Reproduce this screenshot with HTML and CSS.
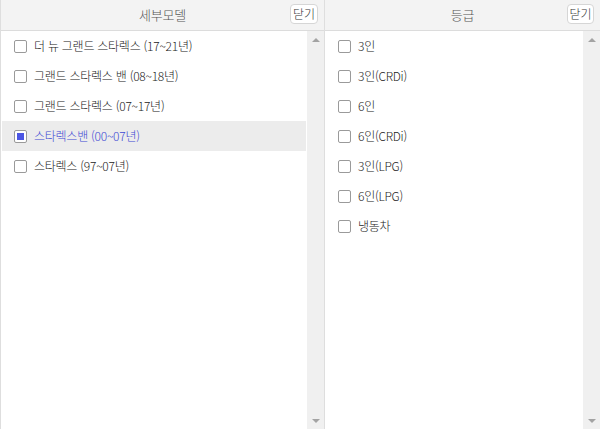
FILE: index.html
```html
<!DOCTYPE html>
<html lang="ko">
<head>
<meta charset="utf-8">
<link rel="stylesheet" href="styles.css">
</head>
<body>
<div class="wrap">
  <section class="panel panel-left">
    <header class="head">
      <span class="title">세부모델</span>
      <button class="close">닫기</button>
    </header>
    <div class="body">
      <ul class="list">
        <li class="row"><span class="cb"></span><span class="label">더 뉴 그랜드 스타렉스 (17~21년)</span></li>
        <li class="row"><span class="cb"></span><span class="label">그랜드 스타렉스 밴 (08~18년)</span></li>
        <li class="row"><span class="cb"></span><span class="label">그랜드 스타렉스 (07~17년)</span></li>
        <li class="row selected"><span class="cb checked"></span><span class="label">스타렉스밴 (00~07년)</span></li>
        <li class="row"><span class="cb"></span><span class="label">스타렉스 (97~07년)</span></li>
      </ul>
      <div class="scroll">
        <span class="arrow up"></span>
        <span class="arrow down"></span>
      </div>
    </div>
  </section>
  <section class="panel panel-right">
    <header class="head">
      <span class="title">등급</span>
      <button class="close">닫기</button>
    </header>
    <div class="body">
      <ul class="list">
        <li class="row"><span class="cb"></span><span class="label">3인</span></li>
        <li class="row"><span class="cb"></span><span class="label">3인(CRDi)</span></li>
        <li class="row"><span class="cb"></span><span class="label">6인</span></li>
        <li class="row"><span class="cb"></span><span class="label">6인(CRDi)</span></li>
        <li class="row"><span class="cb"></span><span class="label">3인(LPG)</span></li>
        <li class="row"><span class="cb"></span><span class="label">6인(LPG)</span></li>
        <li class="row"><span class="cb"></span><span class="label">냉동차</span></li>
      </ul>
      <div class="scroll">
        <span class="arrow up"></span>
        <span class="arrow down"></span>
      </div>
    </div>
  </section>
</div>
</body>
</html>
```

FILE: styles.css
```css
* { box-sizing: border-box; }
html, body { margin: 0; padding: 0; background: #fff; }
body {
  font-family: "Noto Sans CJK KR", "Noto Sans", sans-serif;
  font-size: 12px;
  font-weight: 300;
  color: #222;
}
.wrap {
  display: flex;
  width: 600px;
  height: 429px;
}
.panel {
  display: flex;
  flex-direction: column;
  border-left: 1px solid #dedede;
  height: 429px;
}
.panel-left { width: 324px; }
.panel-right { width: 276px; }
.head {
  position: relative;
  height: 31px;
  background: #f3f3f3;
  border-bottom: 1px solid #dcdcdc;
  display: flex;
  align-items: center;
  justify-content: center;
}
.title {
  font-size: 13px;
  color: #555;
  letter-spacing: -0.2px;
  margin-top: -2px;
}
.close {
  position: absolute;
  right: 6px;
  top: 4px;
  height: 20px;
  width: 28px;
  padding: 0;
  border: 1px solid #d6d6d6;
  border-radius: 4px;
  background: #fff;
  font-family: inherit;
  font-weight: 300;
  font-size: 12px;
  color: #333;
  line-height: 16px;
}
.panel-right .close { width: 27px; }
.body {
  flex: 1;
  display: flex;
  min-height: 0;
}
.list {
  flex: 1;
  list-style: none;
  margin: 0;
  padding: 0 1px;
}
.row {
  height: 30px;
  display: flex;
  align-items: center;
  padding-left: 12px;
}
.row.selected {
  background: #ececec;
  color: #4049d4;
}
.cb {
  width: 13px;
  height: 13px;
  border: 1px solid #9a9a9a;
  border-radius: 2px;
  background: #fff;
  margin-right: 7px;
  flex: none;
  display: flex;
  align-items: center;
  justify-content: center;
}
.cb.checked::after {
  content: "";
  width: 7px;
  height: 7px;
  background: #4b55e3;
}
.label {
  letter-spacing: -0.25px;
  white-space: nowrap;
  margin-top: -1px;
}
.scroll {
  width: 17px;
  flex: none;
  background: #f0f0f0;
  display: flex;
  flex-direction: column;
  justify-content: space-between;
  align-items: center;
  padding: 7px 0 6px;
}
.arrow {
  width: 0;
  height: 0;
  border-left: 4px solid transparent;
  border-right: 4px solid transparent;
}
.arrow.up { border-bottom: 4px solid #a3a3a3; }
.arrow.down { border-top: 4px solid #a3a3a3; }
```
